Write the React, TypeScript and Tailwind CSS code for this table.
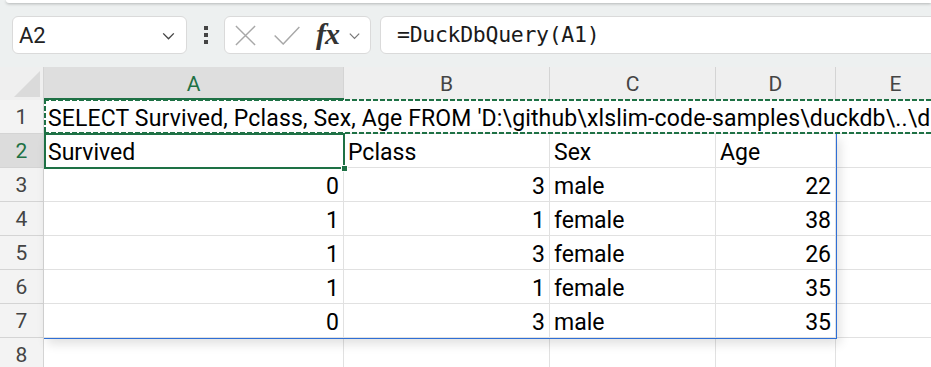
import React from "react";

type Row = { survived: number; pclass: number; sex: string; age: number };

const rows: Row[] = [
  { survived: 0, pclass: 3, sex: "male", age: 22 },
  { survived: 1, pclass: 1, sex: "female", age: 38 },
  { survived: 1, pclass: 3, sex: "female", age: 26 },
  { survived: 1, pclass: 1, sex: "female", age: 35 },
  { survived: 0, pclass: 3, sex: "male", age: 35 },
];

const query =
  "SELECT Survived, Pclass, Sex, Age FROM 'D:\\github\\xlslim-code-samples\\duckdb\\..\\data\\titanic.csv'";

const cellFont = "font-['Roboto',sans-serif] text-[23px] leading-[26px] text-black";

const Chevron = ({ className }: { className?: string }) => (
  <svg viewBox="0 0 16 16" className={className} fill="none" stroke="currentColor" strokeWidth="1.3">
    <path d="M3 6l5 5 5-5" />
  </svg>
);

const RowHeader = ({ n, active }: { n: number; active?: boolean }) => (
  <div
    className={`w-[44px] shrink-0 h-full flex items-center justify-center pt-[3px] border-r border-b border-[#d4d4d4] font-['Roboto',sans-serif] text-[21px] ${
      active ? "bg-[#dcdcdc] text-[#1e7145]" : "bg-[#f3f3f3] text-[#444]"
    }`}
  >
    {n}
  </div>
);

const Cell = ({
  w,
  right,
  children,
}: {
  w: string;
  right?: boolean;
  children?: React.ReactNode;
}) => (
  <div
    className={`${w} shrink-0 h-full flex items-center pt-[4px] border-r border-b border-[#e1e1e1] ${
      right ? "justify-end pr-[4px]" : "pl-[4px]"
    } ${cellFont}`}
  >
    {children}
  </div>
);

const colW = ["w-[300px]", "w-[206px]", "w-[166px]", "w-[120px]", "w-[120px]"];

export default function App() {
  return (
    <div className="w-[931px] h-[367px] overflow-hidden bg-[#edf0f0] flex flex-col">
      {/* ribbon edge */}
      <div className="h-[3px] shrink-0 ml-[6px] bg-white rounded-bl-[8px] shadow-[0_1px_3px_rgba(0,0,0,0.25)]" />

      {/* formula bar */}
      <div className="h-[64px] flex items-center pl-[12px] shrink-0">
        <div className="w-[175px] h-[38px] shrink-0 bg-white rounded-[6px] border border-[#dadada] flex items-center justify-between pl-[6px] pr-[9px]">
          <span className="font-['Roboto',sans-serif] text-[22px] text-[#222]">A2</span>
          <Chevron className="w-[17px] h-[17px] text-[#444]" />
        </div>
        <div className="w-[37px] shrink-0 flex flex-col items-center gap-[3px]">
          <span className="w-[4px] h-[4px] bg-[#444]" />
          <span className="w-[4px] h-[4px] bg-[#444]" />
          <span className="w-[4px] h-[4px] bg-[#444]" />
        </div>
        <div className="w-[147px] h-[38px] shrink-0 bg-white rounded-[6px] border border-[#dadada] flex items-center pl-[9px]">
          <svg viewBox="0 0 24 24" className="w-[23px] h-[23px] text-[#a8a8a8]" fill="none" stroke="currentColor" strokeWidth="1.5">
            <path d="M2 2l20 20M22 2L2 22" />
          </svg>
          <svg viewBox="0 0 28 20" className="w-[28px] h-[19px] ml-[16px] text-[#a8a8a8]" fill="none" stroke="currentColor" strokeWidth="1.5">
            <path d="M1 10l9 9L27 1" />
          </svg>
          <span className="ml-[15px] font-['Liberation_Serif',serif] italic font-bold text-[30px] leading-none text-[#333] tracking-[-1px] pb-[2px]">
            fx
          </span>
          <Chevron className="w-[15px] h-[15px] ml-[8px] text-[#777]" />
        </div>
        <div className="ml-[9px] w-[600px] h-[38px] shrink-0 bg-white rounded-[6px] border border-[#dadada] flex items-center pl-[16px]">
          <span className="font-['DejaVu_Sans_Mono',monospace] text-[21.5px] text-[#1a1a1a] tracking-[-0.3px]">
            =DuckDbQuery(A1)
          </span>
        </div>
      </div>

      {/* sheet */}
      <div className="relative flex-1 bg-white">
        {/* column headers */}
        <div className="flex h-[33px] bg-[#efefef]">
          <div className="w-[44px] shrink-0 h-full relative border-r border-[#d4d4d4]">
            <div className="absolute right-[3px] bottom-[3px] w-0 h-0 border-l-[26px] border-l-transparent border-b-[26px] border-b-[#dadada]" />
          </div>
          {["A", "B", "C", "D", "E"].map((c, i) => (
            <div
              key={c}
              className={`${colW[i]} shrink-0 h-full flex items-center justify-center pt-[2px] border-r border-[#d4d4d4] font-['Roboto',sans-serif] text-[21px] ${
                i === 0 ? "bg-[#dedede] text-[#1e7145]" : "text-[#444]"
              }`}
            >
              {c}
            </div>
          ))}
        </div>

        {/* row 1: the query text runs over the empty cells */}
        <div className="flex h-[34px]">
          <RowHeader n={1} />
          <div className={`flex-1 h-full flex items-center pt-[4px] pl-[4px] border-b border-[#e1e1e1] whitespace-nowrap overflow-hidden tracking-[0.15px] ${cellFont}`}>
            {query}
          </div>
        </div>

        {/* row 2: headings */}
        <div className="flex h-[34px]">
          <RowHeader n={2} active />
          <Cell w={colW[0]}>Survived</Cell>
          <Cell w={colW[1]}>Pclass</Cell>
          <Cell w={colW[2]}>Sex</Cell>
          <Cell w={colW[3]}>Age</Cell>
          <Cell w={colW[4]} />
        </div>

        {rows.map((r, i) => (
          <div key={i} className="flex h-[34px]">
            <RowHeader n={i + 3} />
            <Cell w={colW[0]} right>
              {r.survived}
            </Cell>
            <Cell w={colW[1]} right>
              {r.pclass}
            </Cell>
            <Cell w={colW[2]}>{r.sex}</Cell>
            <Cell w={colW[3]} right>
              {r.age}
            </Cell>
            <Cell w={colW[4]} />
          </div>
        ))}

        <div className="flex h-[34px]">
          <RowHeader n={8} />
          <Cell w={colW[0]} />
          <Cell w={colW[1]} />
          <Cell w={colW[2]} />
          <Cell w={colW[3]} />
          <Cell w={colW[4]} />
        </div>

        {/* spill range outline */}
        <div className="absolute left-[44px] top-[67px] w-[793px] h-[205px] border-r border-b border-[#2f6fd6] shadow-[3px_5px_10px_rgba(0,0,0,0.12)] pointer-events-none" />

        {/* copy marquee around row 1 */}
        <div className="absolute left-[44px] right-0 top-[32px] h-[2px] bg-[repeating-linear-gradient(90deg,#1e7145_0_5px,transparent_5px_7px)]" />
        <div className="absolute left-[44px] right-0 top-[65px] h-[2px] bg-[repeating-linear-gradient(90deg,#1e7145_0_5px,transparent_5px_7px)]" />
        <div className="absolute left-[44px] top-[32px] w-[2px] h-[35px] bg-[repeating-linear-gradient(180deg,#1e7145_0_5px,transparent_5px_7px)]" />
        <div className="absolute left-[44px] top-[31px] w-[300px] h-[2px] bg-[#1e7145]" />

        {/* active cell A2 */}
        <div className="absolute left-[44px] top-[66px] w-[301px] h-[36px] border-2 border-[#1e7145] pointer-events-none" />
        <div className="absolute left-[341px] top-[98px] w-[7px] h-[7px] bg-[#1e7145] border border-white" />
      </div>
    </div>
  );
}
